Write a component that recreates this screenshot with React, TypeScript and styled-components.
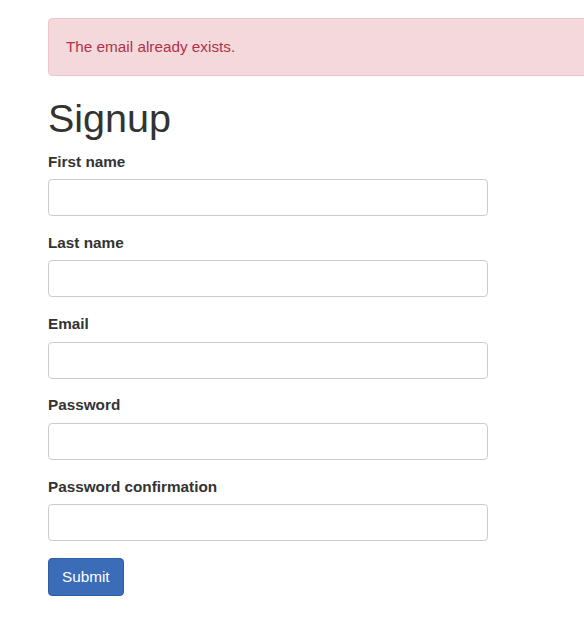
import React from "react";
import styled, { createGlobalStyle } from "styled-components";

const GlobalStyle = createGlobalStyle`
  html, body {
    margin: 0;
    padding: 0;
    background: #ffffff;
    overflow-x: hidden;
  }
  body {
    font-family: "Liberation Sans", Arial, Helvetica, sans-serif;
    font-size: 15.3px;
    line-height: 1.5;
    color: #333333;
  }
  * { box-sizing: border-box; }
`;

const Page = styled.div`
  padding: 18px 0 40px 48px;
  overflow: hidden;
`;

const Alert = styled.div`
  width: 720px;
  padding: 16.5px 17px;
  margin-bottom: 20px;
  border: 1px solid #f0c6cc;
  border-radius: 4px;
  background: #f4d9dc;
  color: #b3304a;
  font-size: 15.3px;
  line-height: 22.5px;
`;

const Title = styled.h1`
  margin: 0 0 10px;
  font-size: 39.5px;
  font-weight: 400;
  line-height: 45px;
  color: #333333;
`;

const Form = styled.form`
  width: 440px;
`;

const Group = styled.div`
  margin-bottom: 15.75px;
`;

const Label = styled.label`
  display: block;
  margin-bottom: 6px;
  font-weight: 700;
  font-size: 15.3px;
  line-height: 22.5px;
  color: #333333;
`;

const Input = styled.input`
  display: block;
  width: 100%;
  height: 37px;
  padding: 6px 12px;
  border: 1px solid #cccccc;
  border-radius: 4px;
  background: #ffffff;
  font-family: inherit;
  font-size: 15px;
  color: #555555;
  outline: none;
`;

const Button = styled.button`
  display: inline-block;
  margin-top: 1px;
  padding: 7px 13px;
  border: 1px solid #2e5fa3;
  border-radius: 4px;
  background: #3a6cb8;
  color: #ffffff;
  font-family: inherit;
  font-size: 15.3px;
  line-height: 22px;
  cursor: pointer;
`;

const fields: { label: string; type: string }[] = [
  { label: "First name", type: "text" },
  { label: "Last name", type: "text" },
  { label: "Email", type: "email" },
  { label: "Password", type: "password" },
  { label: "Password confirmation", type: "password" },
];

export default function App() {
  return (
    <>
      <GlobalStyle />
      <Page>
        <Alert>The email already exists.</Alert>
        <Title>Signup</Title>
        <Form onSubmit={(e) => e.preventDefault()}>
          {fields.map((f) => (
            <Group key={f.label}>
              <Label>{f.label}</Label>
              <Input type={f.type} />
            </Group>
          ))}
          <Button type="submit">Submit</Button>
        </Form>
      </Page>
    </>
  );
}
